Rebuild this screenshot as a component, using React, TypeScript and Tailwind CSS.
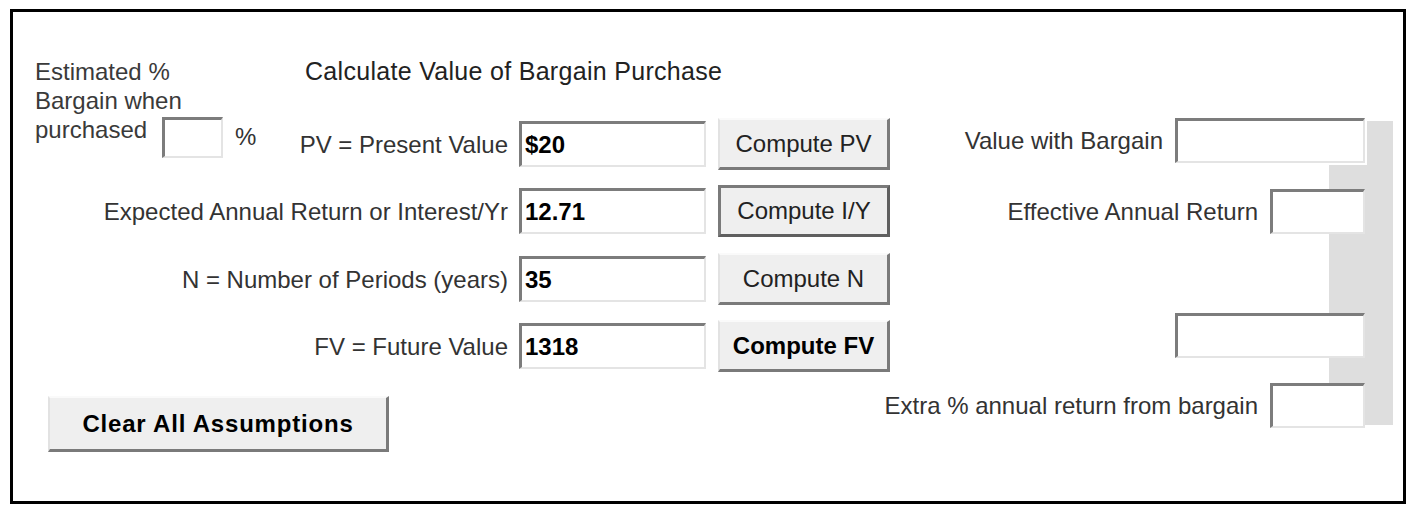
import React from "react"

const FONT = "font-['Liberation_Sans',Arial,Helvetica,sans-serif]"

const INPUT =
  "bg-white border-t-[3px] border-l-[3px] border-b-2 border-r-2 border-t-[#7c7c7c] border-l-[#7c7c7c] border-b-[#e4e4e4] border-r-[#e4e4e4] outline-none px-[3px] text-[24px] font-bold text-black"

const BUTTON =
  "bg-[#efefef] border-t-2 border-l-2 border-b-[3px] border-r-[3px] border-t-[#fafafa] border-l-[#e2e2e2] border-b-[#7a7a7a] border-r-[#7a7a7a] text-[24px] text-[#222] leading-none"

const BUTTON_FOCUSED =
  "bg-[#efefef] border-[3px] border-[#7a7a7a] border-b-[#5f5f5f] border-r-[#5f5f5f] text-[24px] text-[#222] leading-none"

interface RowProps {
  label: string
  value: string
  button: string
  labelWidth: string
  focused?: boolean
  bold?: boolean
  className?: string
}

function CalcRow({ label, value, button, labelWidth, focused, bold, className }: RowProps) {
  return (
    <div className={`flex items-center h-[52px] ${className ?? ""}`}>
      <span className={`${labelWidth} shrink-0 text-right text-[24px] leading-[29px] text-[#333] whitespace-nowrap`}>
        {label}
      </span>
      <input
        readOnly
        value={value}
        className={`${INPUT} ml-[11px] w-[187px] h-[46px]`}
      />
      <button
        className={`${focused ? BUTTON_FOCUSED : BUTTON} ml-[12px] w-[172px] h-[52px] ${bold ? "font-bold text-black" : ""}`}
      >
        {button}
      </button>
    </div>
  )
}

function OutRow({ label, wide, className }: { label?: string; wide?: boolean; className?: string }) {
  return (
    <div className={`relative z-10 flex items-center gap-[12px] ${className ?? ""}`}>
      {label && (
        <span className="text-[24px] leading-[29px] text-[#333] whitespace-nowrap">{label}</span>
      )}
      <input readOnly value="" className={`${INPUT} h-[45px] ${wide ? "w-[190px]" : "w-[95px]"}`} />
    </div>
  )
}

export default function App() {
  return (
    <div className={`w-[1414px] h-[511px] bg-white overflow-hidden ${FONT}`}>
      <div className="ml-[10px] mt-[9px] w-[1396px] h-[495px] border-[3px] border-black flex">
        {/* Calculator */}
        <div className="w-[877px] shrink-0 flex flex-col pt-[45px]">
          <div className="flex">
            {/* Estimated % bargain */}
            <div className="w-[257px] shrink-0 pl-[22px] flex items-start">
              <div className="text-[24px] leading-[29px] text-[#3a3a3a] whitespace-nowrap">
                Estimated %<br />
                Bargain when<br />
                purchased
                <input
                  readOnly
                  value=""
                  className={`${INPUT} ml-[15px] w-[61px] h-[41px] align-text-top mt-px`}
                />
              </div>
              <span className="ml-[12px] mt-[65px] text-[24px] leading-[29px] text-[#333]">%</span>
            </div>
            <div className="flex flex-col">
              <div className="pl-[35px] text-[25px] tracking-[0.3px] leading-[29px] text-[#222] whitespace-nowrap">
                Calculate Value of Bargain Purchase
              </div>
              <CalcRow
                className="mt-[32px]"
                labelWidth="w-[238px]"
                label="PV = Present Value"
                value="$20"
                button="Compute PV"
              />
            </div>
          </div>
          <CalcRow
            className="mt-[15px]"
            labelWidth="w-[495px]"
            label="Expected Annual Return or Interest/Yr"
            value="12.71"
            button="Compute I/Y"
            focused
          />
          <CalcRow
            className="mt-[16px]"
            labelWidth="w-[495px]"
            label="N = Number of Periods (years)"
            value="35"
            button="Compute N"
          />
          <CalcRow
            className="mt-[15px]"
            labelWidth="w-[495px]"
            label="FV = Future Value"
            value="1318"
            button="Compute FV"
            bold
          />
          <button
            className={`${BUTTON} mt-[24px] ml-[35px] w-[341px] h-[56px] font-bold text-black tracking-[0.8px]`}
          >
            Clear All Assumptions
          </button>
        </div>

        {/* Bargain results */}
        <div className="relative flex-1 min-w-0 flex flex-col items-end pt-[106px] pr-[38px]">
          <div className="absolute right-[10px] top-[109px] w-[26px] h-[304px] bg-[#dedede]" />
          <div className="absolute right-[10px] top-[153px] w-[64px] h-[260px] bg-[#dedede]" />
          <OutRow label="Value with Bargain" wide />
          <OutRow className="mt-[26px]" label="Effective Annual Return" />
          <OutRow className="mt-[79px]" wide />
          <OutRow className="mt-[25px]" label="Extra % annual return from bargain" />
        </div>
      </div>
    </div>
  )
}
